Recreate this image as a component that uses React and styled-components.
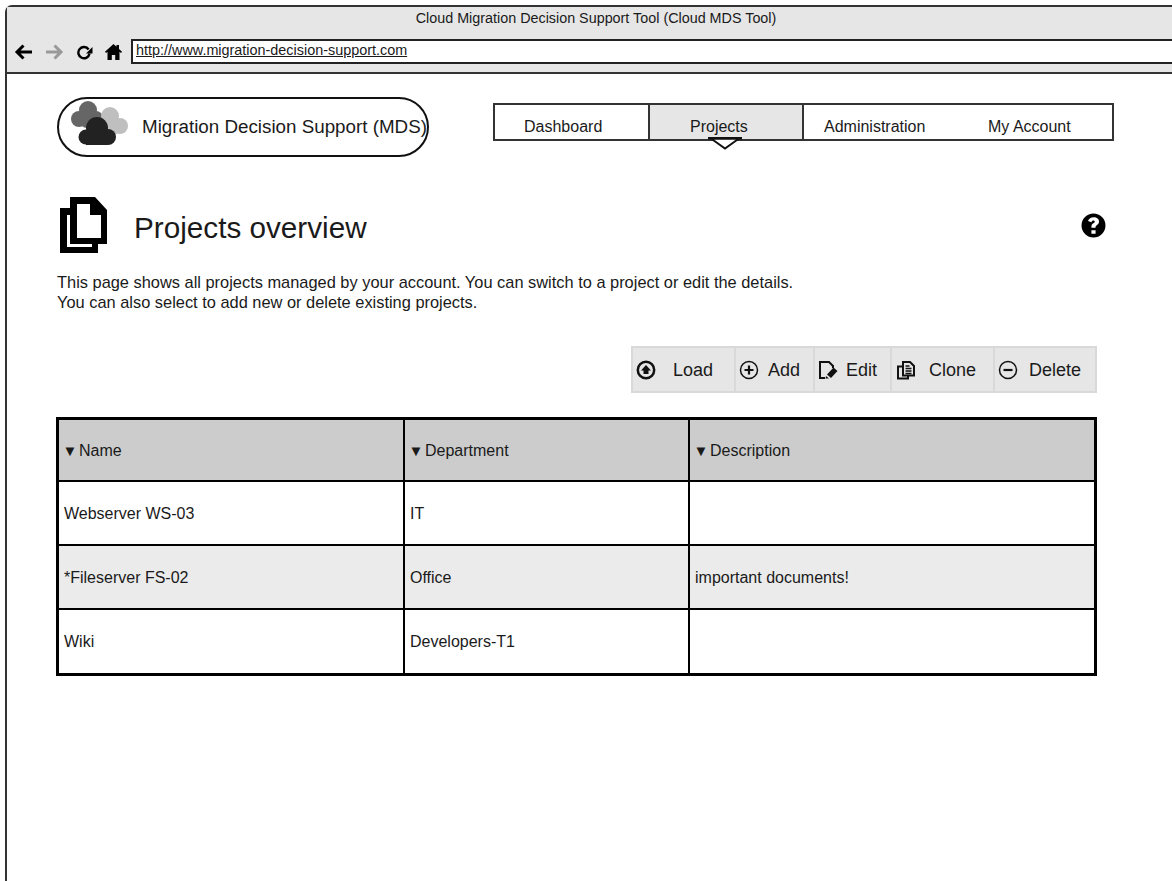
import React from "react";
import styled, { createGlobalStyle } from "styled-components";

const Global = createGlobalStyle`
  html, body { margin: 0; padding: 0; height: 881px; overflow: hidden; background: #fff; }
  body { font-family: "Liberation Sans", Arial, sans-serif; color: #1a1a1a; }
`;

const Frame = styled.div`
  margin: 5px 0 0 5px;
  width: 1200px;
  height: 900px;
  box-sizing: border-box;
  border: 2px solid #333;
  border-radius: 7px 7px 0 0;
  background: #fff;
`;
const Chrome = styled.header`
  height: 67px;
  box-sizing: border-box;
  background: #e6e6e6;
  border-bottom: 2px solid #333;
`;
const WindowTitle = styled.div`
  width: 1178px;
  text-align: center;
  font-size: 14.35px;
  line-height: 16px;
  padding-top: 3px;
  height: 32px;
  box-sizing: border-box;
  white-space: nowrap;
`;
const AddressRow = styled.div`
  display: flex;
  align-items: center;
  height: 25px;
`;
const NavIcon = styled.svg`
  flex: none;
  width: ${(p) => p.$w}px;
  height: 16px;
  margin-left: ${(p) => p.$ml}px;
  fill: none;
  stroke: ${(p) => (p.$muted ? "#999" : "#000")};
`;
const AddressBar = styled.div`
  flex: 1;
  margin-left: 9px;
  height: 25px;
  box-sizing: border-box;
  background: #fff;
  border: 2px solid #222;
  font-size: 14.4px;
  line-height: 19px;
  padding-left: 3px;
  text-decoration: underline;
`;
const Content = styled.main`
  padding: 23px 0 0 50px;
  width: 1058px;
`;
const TopRow = styled.div`
  display: flex;
  align-items: flex-start;
`;
const Brand = styled.div`
  width: 372px;
  height: 60px;
  box-sizing: border-box;
  border: 2px solid #111;
  border-radius: 30px;
  display: flex;
  align-items: center;
  padding-left: 12px;
  font-size: 18.8px;
  white-space: nowrap;
`;
const BrandMark = styled.svg`
  flex: none;
  width: 57px;
  height: 44px;
  margin-bottom: 8px;
`;
const BrandText = styled.span`
  margin-left: 14px;
`;
const Nav = styled.nav`
  margin: 6px 0 0 64px;
  width: 621px;
  height: 38px;
  box-sizing: border-box;
  border: 2px solid #333;
  display: flex;
`;
const NavItem = styled.div`
  width: ${(p) => p.$w}px;
  box-sizing: border-box;
  font-size: 16px;
  line-height: 18px;
  padding: 13px 0 0 ${(p) => p.$pl}px;
  position: relative;
  white-space: nowrap;
  ${(p) => p.$active && `
    background: #e6e6e6;
    border-left: 2px solid #333;
    border-right: 2px solid #333;
  `}
`;
const Caret = styled.svg`
  position: absolute;
  left: 58px;
  top: 32px;
  width: 34px;
  height: 13px;
`;
const TitleRow = styled.div`
  display: flex;
  align-items: center;
  margin-top: 39px;
  height: 58px;
  width: 1049px;
`;
const PageIcon = styled.svg`
  width: 50px;
  height: 58px;
  flex: none;
  margin-left: 2px;
`;
const Heading = styled.h1`
  flex: 1;
  margin: 0 0 0 25px;
  padding-top: 6px;
  font-size: 29.7px;
  font-weight: 400;
`;
const HelpIcon = styled.svg`
  width: 25px;
  height: 25px;
  flex: none;
`;
const Intro = styled.p`
  margin: 18px 0 0;
  font-size: 16.4px;
  line-height: 20px;
  white-space: nowrap;
`;
const Toolbar = styled.div`
  margin: 34px 0 0 574px;
  width: 466px;
  height: 47px;
  display: flex;
  box-sizing: border-box;
  background: #e6e6e6;
  border: 2px solid #d9d9d9;
`;
const ToolButton = styled.div`
  width: ${(p) => p.$w}px;
  flex: none;
  box-sizing: border-box;
  display: flex;
  align-items: center;
  padding-left: ${(p) => p.$pl}px;
  font-size: 18px;
  & + & { border-left: 2px solid #d9d9d9; }
`;
const ToolLabel = styled.span`
  margin: 2px 0 0 ${(p) => p.$ml}px;
`;
const ToolIcon = styled.svg`
  width: 20px;
  height: 20px;
  flex: none;
  fill: none;
  stroke: #111;
`;
const Grid = styled.div`
  margin: 24px 0 0 -1px;
  width: 1041px;
  box-sizing: border-box;
  border: 3px solid #000;
  font-size: 16px;
`;
const GridRow = styled.div`
  display: grid;
  grid-template-columns: 344px 285px 1fr;
  height: ${(p) => p.$h}px;
  background: ${(p) => p.$bg};
  & + & { border-top: 2px solid #000; }
`;
const GridCell = styled.div`
  display: flex;
  align-items: center;
  padding: 1px 0 0 5px;
  & + & { border-left: 2px solid #000; }
`;
const Sort = styled.span`
  font-size: 15px;
  width: 16.5px;
  margin-left: -1.5px;
  flex: none;
`;

const rows = [
  { name: "Webserver WS-03", dept: "IT", desc: "", bg: "#fff", h: 62 },
  { name: "*Fileserver FS-02", dept: "Office", desc: "important documents!", bg: "#ebebeb", h: 62 },
  { name: "Wiki", dept: "Developers-T1", desc: "", bg: "#fff", h: 63 },
];

export default function App() {
  return (
    <>
      <Global />
      <Frame>
        <Chrome>
          <WindowTitle>Cloud Migration Decision Support Tool (Cloud MDS Tool)</WindowTitle>
          <AddressRow>
            <NavIcon $w={18} $ml={7} viewBox="0 0 18 16" strokeWidth="3">
              <path d="M18 8H3M9.500 1.500 3 8l6.500 6.500" />
            </NavIcon>
            <NavIcon $w={18} $ml={14} $muted viewBox="0 0 18 16" strokeWidth="3">
              <path d="M0 8h15M8.500 1.500 15 8l-6.500 6.500" />
            </NavIcon>
            <NavIcon $w={17} $ml={12} viewBox="0 0 17 16" strokeWidth="2.400">
              <path d="M12.600 5.500A5.600 5.600 0 1 0 13.500 9.500" />
              <path fill="#000" stroke="none" d="M16.500 3v6.500H10z" />
            </NavIcon>
            <NavIcon $w={17} $ml={12} viewBox="0 0 17 16" stroke="none">
              <path fill="#000" stroke="none" d="M8.500 0 0 7.800l1 1.200L2.500 7.700V16h4.300v-5h3.400v5h4.300V7.700L16 9l1-1.200-3-2.800V1h-2.500v1.700z" />
            </NavIcon>
            <AddressBar>http://www.migration-decision-support.com</AddressBar>
          </AddressRow>
        </Chrome>
        <Content>
          <TopRow>
            <Brand>
              <BrandMark viewBox="0 0 57 44">
                <g fill="#666">
                  <circle cx="17" cy="9" r="9" />
                  <circle cx="8" cy="18" r="8" />
                  <circle cx="25" cy="17" r="7" />
                  <circle cx="16" cy="20" r="7" />
                </g>
                <g fill="#bfbfbf">
                  <circle cx="39" cy="15" r="9" />
                  <circle cx="49" cy="25" r="8" />
                  <circle cx="32" cy="25" r="8" />
                  <circle cx="42" cy="27" r="7" />
                </g>
                <g fill="#222">
                  <circle cx="26" cy="27" r="11" />
                  <circle cx="15" cy="36" r="7.500" />
                  <circle cx="37" cy="36" r="8" />
                  <rect x="15" y="30" width="22" height="14" />
                </g>
              </BrandMark>
              <BrandText>Migration Decision Support (MDS)</BrandText>
            </Brand>
            <Nav>
              <NavItem $w={153} $pl={29}>Dashboard</NavItem>
              <NavItem $w={156} $pl={40} $active>
                Projects
                <Caret viewBox="0 0 34 13">
                  <path d="M3 1.500h28L17 11.500z" fill="#fff" stroke="#111" strokeWidth="2" />
                  <path d="M0 1.200h34" stroke="#111" strokeWidth="2.400" />
                </Caret>
              </NavItem>
              <NavItem $w={150} $pl={20}>Administration</NavItem>
              <NavItem $w={158} $pl={34}>My Account</NavItem>
            </Nav>
          </TopRow>
          <TitleRow>
            <PageIcon viewBox="0 0 50 58">
              <path
                fill="#000"
                fillRule="evenodd"
                d="M11 1H36L48 14V48H39V57H1V12H11ZM18 8H31V19H42V42H18ZM8 19H11V48H33V51H8Z"
              />
            </PageIcon>
            <Heading>Projects overview</Heading>
            <HelpIcon viewBox="0 0 24 24">
              <path
                fill="#000"
                fillRule="evenodd"
                d="M12 0.500a11.500 11.500 0 1 0 0 23 11.500 11.500 0 0 0 0-23zm-2 16h4v3.500h-4zM12.300 4c3 0 5 1.700 5 4.200 0 1.800-1 2.700-2.200 3.500-.8.600-1.100 1-1.100 1.700v.8h-4v-1c0-1.700.8-2.600 1.900-3.300.8-.6 1.300-1 1.300-1.600 0-.7-.5-1.100-1.300-1.100-.9 0-1.500.5-1.900 1.600L6.700 7.600C7.400 5.300 9.500 4 12.300 4z"
              />
            </HelpIcon>
          </TitleRow>
          <Intro>
            This page shows all projects managed by your account. You can switch to a project or edit the details.
            <br />
            You can also select to add new or delete existing projects.
          </Intro>
          <Toolbar>
            <ToolButton $w={101} $pl={3}>
              <ToolIcon viewBox="0 0 20 20">
                <circle cx="10" cy="10" r="8.200" strokeWidth="2.500" />
                <path fill="#111" stroke="none" d="M10 5 15 10.500H12.500V14H7.500V10.500H5z" />
              </ToolIcon>
              <ToolLabel $ml={17}>Load</ToolLabel>
            </ToolButton>
            <ToolButton $w={79} $pl={3}>
              <ToolIcon viewBox="0 0 20 20" strokeWidth="1.500">
                <circle cx="10" cy="10" r="8.500" />
                <path strokeWidth="2.200" d="M10 5.500v9M5.500 10h9" />
              </ToolIcon>
              <ToolLabel $ml={9}>Add</ToolLabel>
            </ToolButton>
            <ToolButton $w={77} $pl={3}>
              <ToolIcon viewBox="0 0 20 20" strokeWidth="2">
                <path d="M7 18H2V2h9l4 4v2" />
                <path fill="#111" stroke="none" d="M15.500 7.500 19.500 11l-6.500 7-4-3.500zM8 16l3 2.500H7.500z" />
              </ToolIcon>
              <ToolLabel $ml={8}>Edit</ToolLabel>
            </ToolButton>
            <ToolButton $w={103} $pl={4}>
              <ToolIcon viewBox="0 0 20 20" strokeWidth="2">
                <path d="M2 6.500h10v12H2z" />
                <path fill="#e6e6e6" d="M7 2h7l4 4v9.500H7z" />
                <path strokeWidth="1.300" d="M9.500 6h4M9.500 8.500h6M9.500 11h6M9.500 13.500h6" />
              </ToolIcon>
              <ToolLabel $ml={13}>Clone</ToolLabel>
            </ToolButton>
            <ToolButton $w={102} $pl={3}>
              <ToolIcon viewBox="0 0 20 20" strokeWidth="1.500">
                <circle cx="10" cy="10" r="8.500" />
                <path strokeWidth="2.200" d="M5.500 10h9" />
              </ToolIcon>
              <ToolLabel $ml={11}>Delete</ToolLabel>
            </ToolButton>
          </Toolbar>
          <Grid>
            <GridRow $h={60} $bg="#cccccc">
              <GridCell><Sort>▼</Sort>Name</GridCell>
              <GridCell><Sort>▼</Sort>Department</GridCell>
              <GridCell><Sort>▼</Sort>Description</GridCell>
            </GridRow>
            {rows.map((r) => (
              <GridRow key={r.name} $h={r.h} $bg={r.bg}>
                <GridCell>{r.name}</GridCell>
                <GridCell>{r.dept}</GridCell>
                <GridCell>{r.desc}</GridCell>
              </GridRow>
            ))}
          </Grid>
        </Content>
      </Frame>
    </>
  );
}
